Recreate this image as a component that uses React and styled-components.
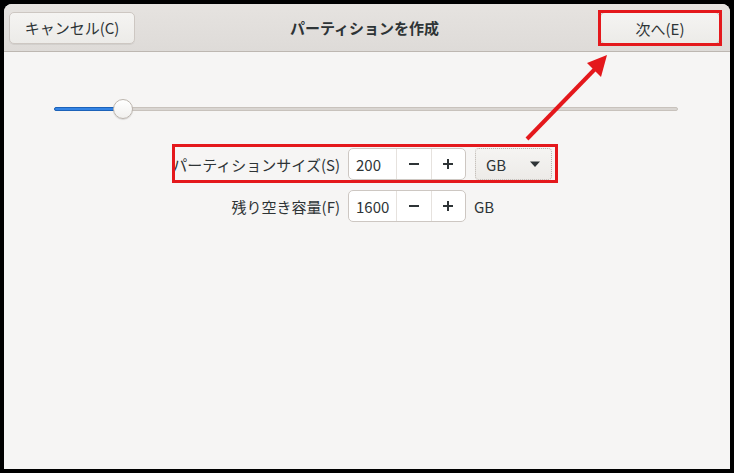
import React from 'react';
import styled, { createGlobalStyle } from 'styled-components';

const GlobalStyle = createGlobalStyle`
  html, body {
    margin: 0;
    padding: 0;
    background: #000;
  }
  * {
    box-sizing: border-box;
  }
`;

const RED = '#e4181c';
const FONT = `"Noto Sans CJK JP", "Noto Sans", "Liberation Sans", sans-serif`;

const Screen = styled.div`
  position: relative;
  width: 734px;
  height: 473px;
  background: #000;
  padding: 4px 4px 0 4px;
  font-family: ${FONT};
  font-size: 15px;
  color: #2e3436;
`;

const Window = styled.div`
  width: 726px;
  height: 465px;
  background: #f6f5f4;
  border-radius: 8px 8px 0 0;
  overflow: hidden;
  display: flex;
  flex-direction: column;
`;

const HeaderBar = styled.div`
  height: 48px;
  flex: none;
  display: grid;
  grid-template-columns: 1fr auto 1fr;
  align-items: center;
  padding: 0 10px 0 5px;
  background: linear-gradient(#e6e3e0, #dedbd8);
  border-bottom: 1px solid #bdb7b1;
`;

const Title = styled.div`
  font-weight: bold;
  font-size: 15px;
  color: #2e3436;
`;

const Button = styled.button`
  position: relative;
  justify-self: ${p => (p.$end ? 'end' : 'start')};
  width: ${p => p.$w}px;
  height: 32px;
  margin-top: ${p => (p.$end ? 1 : 0)}px;
  font-family: ${FONT};
  font-size: 15px;
  color: #2e3436;
  background: linear-gradient(#f5f4f2, #ecebe8);
  border: 1px solid #cdc7c2;
  border-radius: 5px;
  box-shadow: 0 1px 0 rgba(0, 0, 0, 0.06);
  padding: 0;

  ${p =>
    p.$marked &&
    `
    &::after {
      content: '';
      position: absolute;
      inset: -3px;
      border: 3px solid ${RED};
      pointer-events: none;
    }
  `}
`;

const Body = styled.div`
  flex: 1;
  display: flex;
  flex-direction: column;
  align-items: center;
`;

const SliderWrap = styled.div`
  position: relative;
  align-self: stretch;
  margin: 47px 52px 0 50px;
  height: 20px;
  display: flex;
  align-items: center;
`;

const Trough = styled.div`
  position: relative;
  flex: 1;
  height: 4px;
  border-radius: 2px;
  background: #d9d5d1;
  border: 1px solid #c8c2bc;
`;

const Fill = styled.div`
  position: absolute;
  left: -1px;
  top: -1px;
  bottom: -1px;
  border-radius: 2px;
  background: #3584e4;
  border: 1px solid #1c62b9;
`;

const Thumb = styled.div`
  position: absolute;
  top: 0;
  width: 20px;
  height: 20px;
  margin-left: -10px;
  border-radius: 50%;
  background: linear-gradient(#ffffff, #f1f0ee);
  border: 1px solid #bcb5ae;
  box-shadow: 0 1px 1px rgba(0, 0, 0, 0.12);
`;

const Rows = styled.div`
  margin-top: 29px;
  display: flex;
  flex-direction: column;
  gap: 10px;
`;

const Row = styled.div`
  position: relative;
  display: flex;
  align-items: center;
  gap: 8px;
  height: 32px;

  ${p =>
    p.$marked &&
    `
    &::after {
      content: '';
      position: absolute;
      left: 0;
      right: 4px;
      top: -4px;
      bottom: -3px;
      border: 3px solid ${RED};
      pointer-events: none;
    }
  `}
`;

const Label = styled.label`
  width: 168px;
  text-align: right;
  white-space: nowrap;
  font-size: 15px;
`;

const SpinBox = styled.div`
  display: flex;
  width: 118px;
  height: 32px;
  background: #fff;
  border: 1px solid #cdc7c2;
  border-radius: 5px;
  overflow: hidden;
`;

const Entry = styled.div`
  width: 48px;
  padding-left: 7px;
  display: flex;
  align-items: center;
  font-size: 15px;
`;

const SpinButton = styled.div`
  width: 35px;
  display: flex;
  align-items: center;
  justify-content: center;
  border-left: 1px solid #e6e2de;
`;

const Trailing = styled.div`
  width: 88px;
  display: flex;
  align-items: center;
`;

const Combo = styled.div`
  margin-left: 1px;
  width: 77px;
  height: 32px;
  display: flex;
  align-items: center;
  justify-content: space-between;
  padding: 0 10px 0 10px;
  background: linear-gradient(#f5f4f2, #edebe8);
  border: 1px dotted #b9b3ad;
  border-radius: 4px;
  font-size: 15px;
`;

const Unit = styled.span`
  font-size: 15px;
`;

const Arrow = styled.svg`
  position: absolute;
  left: 0;
  top: 0;
  pointer-events: none;
`;

const Minus = () => (
  <svg width="12" height="12" viewBox="0 0 12 12">
    <rect x="1" y="5" width="10" height="2" fill="#2e3436" />
  </svg>
);

const Plus = () => (
  <svg width="12" height="12" viewBox="0 0 12 12">
    <rect x="1" y="5" width="10" height="2" fill="#2e3436" />
    <rect x="5" y="1" width="2" height="10" fill="#2e3436" />
  </svg>
);

const Caret = () => (
  <svg width="12" height="8" viewBox="0 0 12 8">
    <path d="M1 1.5 L11 1.5 L6 7 Z" fill="#2e3436" />
  </svg>
);

const Spin = ({ value }) => (
  <SpinBox>
    <Entry>{value}</Entry>
    <SpinButton>
      <Minus />
    </SpinButton>
    <SpinButton>
      <Plus />
    </SpinButton>
  </SpinBox>
);

export default function App() {
  const percent = 11;

  return (
    <>
      <GlobalStyle />
      <Screen>
        <Window>
          <HeaderBar>
            <Button $w={126}>キャンセル(C)</Button>
            <Title>パーティションを作成</Title>
            <Button $w={120} $end $marked>
              次へ(E)
            </Button>
          </HeaderBar>
          <Body>
            <SliderWrap>
              <Trough>
                <Fill style={{ width: `${percent}%` }} />
              </Trough>
              <Thumb style={{ left: `${percent}%` }} />
            </SliderWrap>
            <Rows>
              <Row $marked>
                <Label>パーティションサイズ(S)</Label>
                <Spin value="200" />
                <Trailing>
                  <Combo>
                    <span>GB</span>
                    <Caret />
                  </Combo>
                </Trailing>
              </Row>
              <Row>
                <Label>残り空き容量(F)</Label>
                <Spin value="1600" />
                <Trailing>
                  <Unit>GB</Unit>
                </Trailing>
              </Row>
            </Rows>
          </Body>
        </Window>
        <Arrow width="734" height="473" viewBox="0 0 734 473">
          <line x1="527" y1="139" x2="596" y2="68" stroke={RED} strokeWidth="4" />
          <path d="M607 55 L587 63 L601 77 Z" fill={RED} />
        </Arrow>
      </Screen>
    </>
  );
}
